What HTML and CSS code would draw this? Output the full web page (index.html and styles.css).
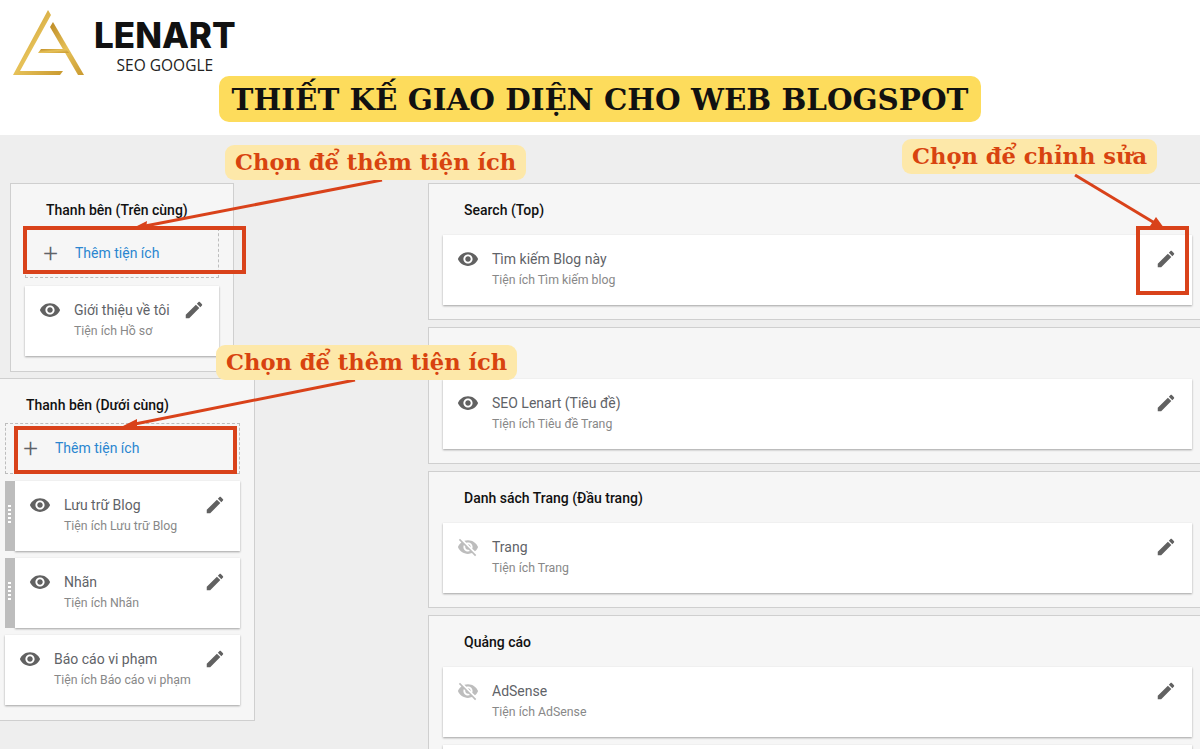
FILE: index.html
```html
<!DOCTYPE html>
<html lang="en">
<head>
  <meta charset="UTF-8">
  <title>Thiết kế giao diện cho web Blogspot</title>
  <link rel="stylesheet" href="styles.css">
</head>
<body>

  <!-- icons -->
  <svg class="icon-defs" width="0" height="0">
    <defs>
      <symbol id="eye" viewBox="0 0 24 24"><path d="M12 4.5C7 4.5 2.73 7.61 1 12c1.73 4.39 6 7.5 11 7.5s9.27-3.11 11-7.5c-1.73-4.39-6-7.5-11-7.5zM12 17c-2.76 0-5-2.24-5-5s2.24-5 5-5 5 2.24 5 5-2.24 5-5 5zm0-8c-1.66 0-3 1.34-3 3s1.34 3 3 3 3-1.34 3-3-1.34-3-3-3z"/></symbol>
      <symbol id="eye-off" viewBox="0 0 24 24"><path d="M12 7c2.76 0 5 2.24 5 5 0 .65-.13 1.26-.36 1.83l2.92 2.92c1.51-1.26 2.7-2.89 3.43-4.75-1.73-4.39-6-7.5-11-7.5-1.4 0-2.74.25-3.98.7l2.16 2.16C10.74 7.13 11.35 7 12 7zM2 4.27l2.28 2.28.46.46C3.08 8.3 1.78 10.02 1 12c1.73 4.39 6 7.5 11 7.5 1.55 0 3.03-.3 4.38-.84l.42.42L19.73 22 21 20.73 3.27 3 2 4.27zM7.53 9.8l1.55 1.55c-.05.21-.08.43-.08.65 0 1.66 1.34 3 3 3 .22 0 .44-.03.65-.08l1.55 1.55c-.67.33-1.41.53-2.2.53-2.76 0-5-2.24-5-5 0-.79.2-1.53.53-2.2zm4.31-.78l3.15 3.15.02-.16c0-1.66-1.34-3-3-3l-.17.01z"/></symbol>
      <symbol id="pencil" viewBox="0 0 24 24"><path d="M3 17.25V21h3.75L17.81 9.94l-3.75-3.75L3 17.25zM20.71 7.04c.39-.39.39-1.02 0-1.41l-2.34-2.34c-.39-.39-1.02-.39-1.41 0l-1.83 1.83 3.75 3.75 1.83-1.83z"/></symbol>
      <linearGradient id="gold" x1="0" y1="0" x2="1" y2="1">
        <stop offset="0" stop-color="#bd8a24"/>
        <stop offset="0.5" stop-color="#e6c158"/>
        <stop offset="1" stop-color="#c9992f"/>
      </linearGradient>
    </defs>
  </svg>

  <!-- Header -->
  <header class="top">
    <div class="logo">
      <svg class="logo-mark" width="72" height="66" viewBox="0 0 72 66">
        <polygon fill="url(#gold)" points="35,0 38,5 7,61 50,61 47,65 0,65"/>
        <polygon fill="url(#gold)" points="40,12 71,65 65,65 37,17"/>
        <polygon fill="url(#gold)" points="28,39 53,39 56,43 25,43"/>
      </svg>
      <div class="logo-text">
        <div class="logo-name">LENART</div>
        <div class="logo-sub">SEO GOOGLE</div>
      </div>
    </div>
    <h1 class="title">THIẾT KẾ GIAO DIỆN CHO WEB BLOGSPOT</h1>
  </header>

  <!-- Layout editor -->
  <main class="editor">
    <div class="col-left">

      <section class="panel panel-top">
        <h3 class="panel-name">Thanh bên (Trên cùng)</h3>
        <div class="add-widget">
          <span class="plus">+</span>
          <span class="add-label">Thêm tiện ích</span>
        </div>
        <div class="card">
          <svg class="eye"><use href="#eye"/></svg>
          <div class="card-text">
            <div class="card-title">Giới thiệu về tôi</div>
            <div class="card-sub">Tiện ích Hồ sơ</div>
          </div>
          <svg class="pencil"><use href="#pencil"/></svg>
        </div>
      </section>

      <section class="panel panel-bottom">
        <h3 class="panel-name">Thanh bên (Dưới cùng)</h3>
        <div class="add-widget">
          <span class="plus">+</span>
          <span class="add-label">Thêm tiện ích</span>
        </div>
        <div class="card card-drag">
          <div class="handle"></div>
          <svg class="eye"><use href="#eye"/></svg>
          <div class="card-text">
            <div class="card-title">Lưu trữ Blog</div>
            <div class="card-sub">Tiện ích Lưu trữ Blog</div>
          </div>
          <svg class="pencil"><use href="#pencil"/></svg>
        </div>
        <div class="card card-drag">
          <div class="handle"></div>
          <svg class="eye"><use href="#eye"/></svg>
          <div class="card-text">
            <div class="card-title">Nhãn</div>
            <div class="card-sub">Tiện ích Nhãn</div>
          </div>
          <svg class="pencil"><use href="#pencil"/></svg>
        </div>
        <div class="card">
          <svg class="eye"><use href="#eye"/></svg>
          <div class="card-text">
            <div class="card-title">Báo cáo vi phạm</div>
            <div class="card-sub">Tiện ích Báo cáo vi phạm</div>
          </div>
          <svg class="pencil"><use href="#pencil"/></svg>
        </div>
      </section>
    </div>

    <div class="col-right">
      <section class="block">
        <h3 class="panel-name">Search (Top)</h3>
        <div class="card">
          <svg class="eye"><use href="#eye"/></svg>
          <div class="card-text">
            <div class="card-title">Tìm kiếm Blog này</div>
            <div class="card-sub">Tiện ích Tìm kiếm blog</div>
          </div>
          <svg class="pencil"><use href="#pencil"/></svg>
        </div>
      </section>

      <section class="block">
        <h3 class="panel-name">&nbsp;</h3>
        <div class="card">
          <svg class="eye"><use href="#eye"/></svg>
          <div class="card-text">
            <div class="card-title">SEO Lenart (Tiêu đề)</div>
            <div class="card-sub">Tiện ích Tiêu đề Trang</div>
          </div>
          <svg class="pencil"><use href="#pencil"/></svg>
        </div>
      </section>

      <section class="block">
        <h3 class="panel-name">Danh sách Trang (Đầu trang)</h3>
        <div class="card">
          <svg class="eye off"><use href="#eye-off"/></svg>
          <div class="card-text">
            <div class="card-title">Trang</div>
            <div class="card-sub">Tiện ích Trang</div>
          </div>
          <svg class="pencil"><use href="#pencil"/></svg>
        </div>
      </section>

      <section class="block">
        <h3 class="panel-name">Quảng cáo</h3>
        <div class="card">
          <svg class="eye off"><use href="#eye-off"/></svg>
          <div class="card-text">
            <div class="card-title">AdSense</div>
            <div class="card-sub">Tiện ích AdSense</div>
          </div>
          <svg class="pencil"><use href="#pencil"/></svg>
        </div>
        <div class="card"></div>
      </section>
    </div>
  </main>

  <!-- Annotations drawn over the screenshot -->
  <svg class="marks" width="1200" height="750" viewBox="0 0 1200 750">
    <g fill="none" stroke="#d9421a" stroke-width="4">
      <rect x="25" y="228" width="219" height="44"/>
      <rect x="16" y="428" width="219" height="44"/>
      <rect x="1138" y="228" width="49" height="65"/>
    </g>
    <g fill="none" stroke="#d9421a" stroke-width="3">
      <path d="M382 180 L140 227"/>
      <path d="M355 380 L130 425"/>
      <path d="M1075 175 L1158 225"/>
    </g>
    <g fill="#d9421a">
      <polygon points="133,228 147,221 146,229"/>
      <polygon points="123,426 137,419 137,428"/>
      <polygon points="1164,228 1150,226 1156,217"/>
    </g>
  </svg>
  <div class="callout callout-a">Chọn để thêm tiện ích</div>
  <div class="callout callout-b">Chọn để thêm tiện ích</div>
  <div class="callout callout-c">Chọn để chỉnh sửa</div>

</body>
</html>
```

FILE: styles.css
```css
* {
  box-sizing: border-box;
  margin: 0;
  padding: 0;
}

body {
  width: 1200px;
  height: 750px;
  overflow: hidden;
  position: relative;
  background: #fff;
  font-family: Roboto, sans-serif;
}

.icon-defs {
  position: absolute;
}

/* Header */
.top {
  height: 135px;
  padding-top: 10px;
  display: flex;
  flex-direction: column;
}

.logo {
  height: 66px;
  padding-left: 13px;
  display: flex;
}

.logo-text {
  margin-left: 9px;
  padding-top: 7px;
  text-align: center;
}

.logo-name {
  font-family: Inter, sans-serif;
  font-size: 35px;
  line-height: 36px;
  font-weight: 800;
  color: #111;
}

.logo-sub {
  margin-top: 3px;
  font-family: "Open Sans", sans-serif;
  font-size: 15.5px;
  line-height: 18px;
  color: #222;
}

.title {
  align-self: center;
  height: 46px;
  padding: 0 13px;
  background: #fddc5c;
  border-radius: 10px;
  font-family: "DejaVu Serif", serif;
  font-size: 29.4px;
  line-height: 48px;
  font-weight: 700;
  color: #111;
  white-space: nowrap;
}

/* Editor */
.editor {
  height: 614px;
  padding-top: 48px;
  background: #eeeeee;
  display: flex;
  overflow: hidden;
}

.col-left {
  width: 428px;
  flex-shrink: 0;
}

.col-right {
  flex: 1;
  display: flex;
  flex-direction: column;
  gap: 7px;
}

.panel,
.block {
  background: #f6f6f6;
  border: 1px solid #cfcfcf;
}

.panel-top {
  width: 224px;
  height: 189px;
  margin-left: 10px;
  padding: 0 14px;
}

.panel-top .panel-name {
  padding-left: 21px;
}

.panel-bottom {
  width: 255px;
  height: 343px;
  margin-top: 6px;
  border-left: none;
  padding: 0 14px 0 5px;
}

.panel-bottom .panel-name {
  padding-left: 21px;
}

.block {
  height: 137px;
  flex-shrink: 0;
  border-right: none;
  padding: 0 8px 0 14px;
}

.block .panel-name {
  padding-left: 21px;
}

.block .pencil {
  margin-right: 1px;
}

.panel-name {
  height: 51px;
  font-size: 14px;
  line-height: 52px;
  font-weight: 500;
  color: #111;
  white-space: nowrap;
}

.add-widget {
  height: 51px;
  margin-top: -7px;
  margin-bottom: 7px;
  padding-bottom: 1px;
  border: 1px dashed #bdbdbd;
  display: flex;
  align-items: center;
}

.panel-top .add-widget {
  height: 50px;
  margin-bottom: 8px;
}

.plus {
  width: 49px;
  text-align: center;
  font-size: 26px;
  font-weight: 300;
  line-height: 26px;
  color: #5f6368;
}

.add-label {
  font-size: 14px;
  color: #2a86d0;
}

/* Widget cards */
.card {
  position: relative;
  height: 70px;
  margin-bottom: 7px;
  padding: 0 14px;
  background: #fff;
  box-shadow: 0 1px 2px rgba(0, 0, 0, 0.35);
  display: flex;
  align-items: flex-start;
}

.block .card {
  margin-bottom: 8px;
}

.card-drag {
  margin-left: 10px;
}

.handle {
  position: absolute;
  left: -10px;
  top: 0;
  bottom: 0;
  width: 10px;
  background: #bdbdbd;
}

.handle::after {
  content: "";
  position: absolute;
  left: 3px;
  top: 24px;
  width: 3px;
  height: 18px;
  background: repeating-linear-gradient(#fff 0 2px, transparent 2px 4px);
}

.eye {
  width: 22px;
  height: 22px;
  margin-top: 13px;
  flex-shrink: 0;
  fill: #616161;
}

.eye.off {
  fill: #bdbdbd;
}

.card-text {
  flex: 1;
  margin-left: 13px;
  padding-top: 15px;
  white-space: nowrap;
}

.card-title {
  font-size: 14px;
  line-height: 18px;
  color: #5f6368;
}

.card-sub {
  margin-top: 4px;
  font-size: 12.3px;
  line-height: 16px;
  color: #888;
}

.pencil {
  width: 22px;
  height: 22px;
  margin-top: 13px;
  flex-shrink: 0;
  fill: #616161;
}

/* Annotations */
.marks {
  position: absolute;
  left: 0;
  top: 0;
}

.callout {
  position: absolute;
  height: 35px;
  padding: 0 10px;
  background: #fde8a9;
  border-radius: 9px;
  font-family: "DejaVu Serif", serif;
  font-size: 22.6px;
  line-height: 35px;
  font-weight: 700;
  color: #d8430f;
  white-space: nowrap;
}

.callout-a {
  left: 225px;
  top: 145px;
}

.callout-b {
  left: 216px;
  top: 345px;
}

.callout-c {
  left: 902px;
  top: 139px;
}
```
